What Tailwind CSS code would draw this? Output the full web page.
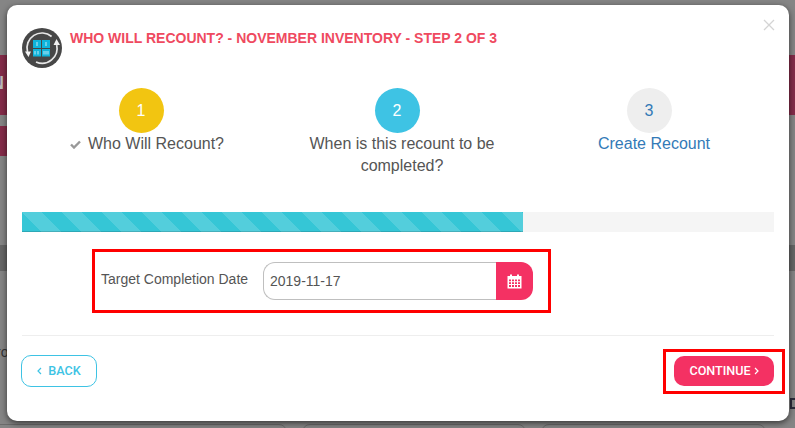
<!DOCTYPE html>
<html lang="en">
<head>
    <meta charset="UTF-8">
    <meta name="viewport" content="width=device-width, initial-scale=1.0">
    <title>Who Will Recount?</title>
    <script src="https://cdn.jsdelivr.net/npm/@tailwindcss/browser@4"></script>
</head>
<body class="w-[795px] h-[428px] overflow-hidden bg-[#858585] font-['Liberation_Sans',Arial,sans-serif]">
    <div class="relative w-[795px] h-[428px] overflow-hidden">
        <!-- Page behind the overlay -->
        <div class="absolute left-0 top-[55px] w-[795px] h-[60px] bg-[#842c49] text-[#bbbbbb] text-[18px] font-bold leading-[56px] -indent-[9px]">N</div>
        <div class="absolute left-0 top-[126px] w-[60px] h-[30px] bg-[#842c49]"></div>
        <div class="absolute left-0 top-[245px] w-[795px] h-[26px] bg-[#666666]"></div>
        <div class="absolute left-0 top-[344px] w-[60px] text-[14px] leading-[16px] text-[#333333] -indent-[4px]">ro</div>
        <div class="absolute left-[790px] top-[398px] w-[8px] h-[11px] border-2 border-[#2b2b3a]"></div>
        <div class="absolute left-[-10px] top-[424px] w-[297px] h-[20px] border border-[#6b6b6b] rounded-[8px]"></div>
        <div class="absolute left-[302px] top-[424px] w-[224px] h-[20px] border border-[#6b6b6b] rounded-[8px]"></div>
        <div class="absolute left-[541px] top-[424px] w-[225px] h-[20px] border border-[#6b6b6b] rounded-[8px]"></div>

        <!-- Modal -->
        <div class="absolute left-[7px] top-[5px] w-[782px] h-[416px] bg-white rounded-[10px] shadow-[0_2px_6px_rgba(0,0,0,0.6)] px-[15px] pt-[23px]">
            <span class="absolute right-[14px] top-[14px] text-[#d4d4d4]">
                <svg width="12" height="12" viewBox="0 0 12 12" class="block"><path d="M1 1L11 11M11 1L1 11" stroke="currentColor" stroke-width="1.3" fill="none"/></svg>
            </span>

            <!-- Header -->
            <div class="flex items-start gap-[8px] h-[40px]">
                <svg width="40" height="40" viewBox="0 0 40 40" class="shrink-0">
                    <circle cx="20" cy="20" r="20" fill="#474747"/>
                    <path d="M29.6 8.5A15 15 0 0 0 5.5 24" stroke="#e8e8e8" stroke-width="1.7" fill="none"/>
                    <path d="M14 34A15 15 0 0 0 34.7 17" stroke="#e8e8e8" stroke-width="1.7" fill="none"/>
                    <path d="M3 23.5L9 23.5L6.5 29ZM31.5 17L38 17L34.5 11Z" fill="#f2f2f2"/>
                    <rect x="11" y="12" width="8" height="8" fill="#0fb5dc"/>
                    <rect x="20" y="12" width="8" height="8" fill="#0fb5dc"/>
                    <rect x="11" y="21" width="8" height="7.5" fill="#0fb5dc"/>
                    <rect x="20" y="21" width="8" height="7.5" fill="#0fb5dc"/>
                    <path d="M15 14V18M24 14V18M13 23V26.5M16 23V26.5M22 23V26.5M24 23V26.5M26 23V26.5" stroke="#d5f3fa" stroke-width="0.9"/>
                </svg>
                <h4 class="text-[14px] leading-[20px] font-bold text-[#ef4a5f]">WHO WILL RECOUNT? - NOVEMBER INVENTORY - STEP 2 OF 3</h4>
            </div>

            <!-- Steps -->
            <div class="grid grid-cols-[254px_256px_248px] mt-[20px] ml-[-2px] h-[124px] text-center text-[16px] leading-[22px] text-[#555555]">
                <div class="flex flex-col items-center">
                    <div class="w-[45px] h-[45px] mr-[12px] rounded-full bg-[#f2c511] text-white flex items-center justify-center">1</div>
                    <p class="flex items-center justify-center gap-[7px]">
                        <svg width="11" height="9" viewBox="0 0 11 9"><path d="M1 4.5L4 7.5L10 1.5" stroke="#999" stroke-width="2.4" fill="none"/></svg>
                        Who Will Recount?
                    </p>
                </div>
                <div class="flex flex-col items-center">
                    <div class="w-[45px] h-[45px] mr-[10px] rounded-full bg-[#3ec3e4] text-white flex items-center justify-center">2</div>
                    <p class="w-[210px]">When is this recount to be completed?</p>
                </div>
                <div class="flex flex-col items-center">
                    <div class="w-[45px] h-[45px] mr-[10px] rounded-full bg-[#eeeeee] text-[#337ab7] flex items-center justify-center">3</div>
                    <p class="text-[#337ab7]">Create Recount</p>
                </div>
            </div>

            <!-- Progress -->
            <div class="h-[20px] bg-[#f5f5f5] w-[752px]">
                <div class="h-full w-[501px] bg-[#35c6d6] bg-[linear-gradient(45deg,rgba(255,255,255,0.15)_25%,transparent_25%,transparent_50%,rgba(255,255,255,0.15)_50%,rgba(255,255,255,0.15)_75%,transparent_75%,transparent)] bg-size-[40px_40px] shadow-[inset_0_-1px_0_rgba(0,0,0,0.15)]"></div>
            </div>

            <!-- Date field -->
            <div class="mt-[17px] ml-[70px] w-[459px] h-[64px] border-[3px] border-[#ff0000] flex items-center pl-[6px]">
                <label class="text-[14px] leading-[20px] text-[#555555] w-[162px] mt-[-4px]">Target Completion Date</label>
                <div class="flex w-[270px] h-[38px]">
                    <input type="text" value="2019-11-17" class="flex-1 min-w-0 border border-[#bfbfbf] border-r-0 rounded-l-[12px] px-[6px] text-[14px] text-[#555555] bg-white outline-none">
                    <span class="w-[37px] bg-[#f43163] rounded-r-[12px] flex items-center justify-center">
                        <svg width="15" height="15" viewBox="0 0 15 15">
                            <path fill="#fff" fill-rule="evenodd" d="M3 0.5h2v1.5h5V0.5h2V2h2.5v12.5H0.5V2H3ZM2 5.5v1.8h2V5.5ZM5 5.5v1.8h2V5.5ZM8 5.5v1.8h2V5.5ZM11 5.5v1.8h2V5.5ZM2 8.3v1.8h2V8.3ZM5 8.3v1.8h2V8.3ZM8 8.3v1.8h2V8.3ZM11 8.3v1.8h2V8.3ZM2 11.1v1.9h2v-1.9ZM5 11.1v1.9h2v-1.9ZM8 11.1v1.9h2v-1.9ZM11 11.1v1.9h2v-1.9Z"/>
                        </svg>
                    </span>
                </div>
            </div>

            <hr class="mt-[22px] w-[752px] border-t border-[#eeeeee]">

            <!-- Footer buttons -->
            <div class="flex justify-between items-center w-[764px] ml-[-1px] mt-[13px]">
                <button class="w-[76px] h-[32px] mt-[-1px] border border-[#3ec3e4] rounded-[10px] text-[#3ec3e4] text-[12.6px] font-medium flex items-center justify-center gap-[6px] font-['Roboto',sans-serif]">
                    <svg width="5" height="8" viewBox="0 0 5 8"><path d="M4 1L1 4L4 7" stroke="currentColor" stroke-width="1.2" fill="none"/></svg>
                    BACK
                </button>
                <div class="w-[122px] h-[45px] border-[3px] border-[#ff0000] flex items-center justify-center">
                    <button class="w-[100px] h-[30px] mb-[1px] rounded-[10px] bg-[#f43163] text-white text-[12.6px] font-medium flex items-center justify-center gap-[3px] font-['Roboto',sans-serif]">
                        CONTINUE
                        <svg width="5" height="8" viewBox="0 0 5 8"><path d="M1 1L4 4L1 7" stroke="currentColor" stroke-width="1.2" fill="none"/></svg>
                    </button>
                </div>
            </div>
        </div>
    </div>
</body>
</html>
